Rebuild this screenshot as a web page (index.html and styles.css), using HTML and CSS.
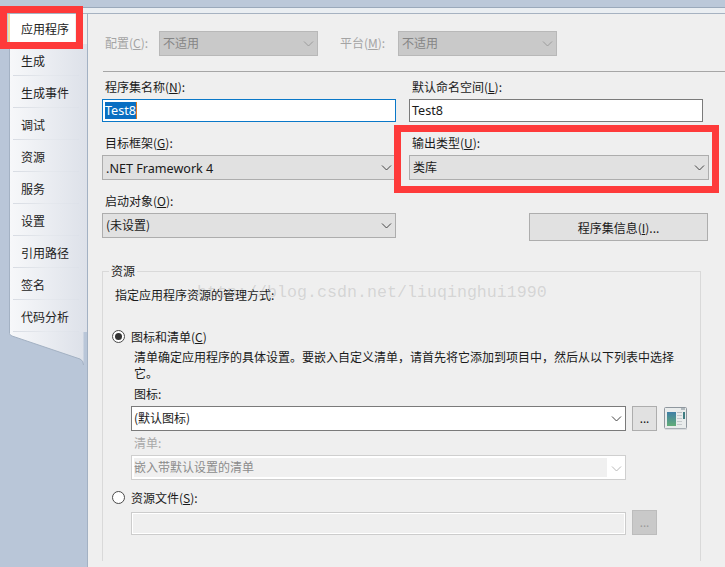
FILE: index.html
```html
<!DOCTYPE html>
<html lang="zh-CN">
<head>
<meta charset="utf-8">
<title>应用程序</title>
<link rel="stylesheet" href="styles.css">
</head>
<body>
<div class="app">
  <div class="strip-blue"></div>
  <div class="strip-light"></div>
  <div class="main">
    <nav class="side">
      <div class="tab tab-active">应用程序</div>
      <div class="tab">生成</div>
      <div class="tab">生成事件</div>
      <div class="tab">调试</div>
      <div class="tab">资源</div>
      <div class="tab">服务</div>
      <div class="tab">设置</div>
      <div class="tab">引用路径</div>
      <div class="tab">签名</div>
      <div class="tab">代码分析</div>
      <svg class="tail" width="75" height="33" viewBox="0 0 75 33">
        <defs><linearGradient id="tailg" x1="0" x2="1" y1="0" y2="0"><stop offset="0" stop-color="#f7f8fa"/><stop offset="1" stop-color="#dde1e9"/></linearGradient></defs>
        <path d="M0.5 0V1.5Q0.5 3 3 4L71 27Q74.5 28.5 74.5 33V0Z" fill="url(#tailg)"/>
        <path d="M0.5 0V1.5Q0.5 3 3 4L71 27Q74.5 28.5 74.5 33" fill="none" stroke="#a3b1c3"/>
      </svg>
    </nav>
    <section class="content">
      <div class="config-row">
        <span class="label-config disabled-text">配置(<u>C</u>):</span>
        <div class="select select-off w159"><span>不适用</span><svg class="chev" width="11" height="6" viewBox="0 0 11 6"><path d="M1 0.5L5.5 5L10 0.5" fill="none" stroke="#9c9c9c"/></svg></div>
        <span class="label-platform disabled-text">平台(<u>M</u>):</span>
        <div class="select select-off w159"><span>不适用</span><svg class="chev" width="11" height="6" viewBox="0 0 11 6"><path d="M1 0.5L5.5 5L10 0.5" fill="none" stroke="#9c9c9c"/></svg></div>
      </div>
      <div class="sep"></div>
      <div class="form-grid">
        <div class="field">
          <label class="lbl">程序集名称(<u>N</u>):</label>
          <div class="input input-focus"><span class="selected">Test8</span></div>
        </div>
        <div class="field">
          <label class="lbl">默认命名空间(<u>L</u>):</label>
          <div class="input input-narrow">Test8</div>
        </div>
        <div class="field">
          <label class="lbl">目标框架(<u>G</u>):</label>
          <div class="select"><span class="latin">.NET Framework 4</span><svg class="chev" width="11" height="6" viewBox="0 0 11 6"><path d="M1 0.5L5.5 5L10 0.5" fill="none" stroke="#444"/></svg></div>
        </div>
        <div class="field">
          <label class="lbl">输出类型(<u>U</u>):</label>
          <div class="select"><span>类库</span><svg class="chev" width="11" height="6" viewBox="0 0 11 6"><path d="M1 0.5L5.5 5L10 0.5" fill="none" stroke="#444"/></svg></div>
        </div>
        <div class="field">
          <label class="lbl">启动对象(<u>O</u>):</label>
          <div class="select"><span>(未设置)</span><svg class="chev" width="11" height="6" viewBox="0 0 11 6"><path d="M1 0.5L5.5 5L10 0.5" fill="none" stroke="#444"/></svg></div>
        </div>
        <div class="field field-button">
          <button class="btn-info">程序集信息(<u>I</u>)...</button>
        </div>
      </div>
      <div class="group">
        <span class="legend">资源</span>
        <p class="hint">指定应用程序资源的管理方式:</p>
        <div class="radio-row first-radio"><span class="radio radio-on"></span><span>图标和清单(<u>C</u>)</span></div>
        <div class="indent">
          <p class="desc">清单确定应用程序的具体设置。要嵌入自定义清单，请首先将它添加到项目中，然后从以下列表中选择它。</p>
          <label class="lbl lbl-icon">图标:</label>
          <div class="pick-row">
            <div class="select select-white w495"><span>(默认图标)</span><svg class="chev" width="11" height="6" viewBox="0 0 11 6"><path d="M1 0.5L5.5 5L10 0.5" fill="none" stroke="#444"/></svg></div>
            <button class="btn-dots">...</button>
            <svg class="app-icon" width="23" height="23" viewBox="0 0 23 23">
              <defs><linearGradient id="pane" x1="0" x2="0" y1="0" y2="1"><stop offset="0" stop-color="#3f7fa6"/><stop offset="1" stop-color="#62ad78"/></linearGradient></defs>
              <rect x="0.5" y="0.5" width="22" height="21" rx="1" fill="#e9ecec" stroke="#8f979e"/>
              <rect x="1" y="21.5" width="22" height="1" fill="#c4c8cc"/>
              <rect x="3" y="5" width="9" height="14" fill="url(#pane)"/>
              <rect x="13" y="5" width="5" height="1" fill="#b7bdc0"/>
              <rect x="13" y="8" width="5" height="1" fill="#c5c9cc"/>
              <rect x="13" y="11" width="5" height="1" fill="#c5c9cc"/>
              <rect x="13" y="14" width="5" height="1" fill="#c5c9cc"/>
              <rect x="13" y="17" width="5" height="1" fill="#c5c9cc"/>
              <rect x="19" y="5" width="2" height="7" fill="#3f7d82"/>
              <rect x="17" y="1.5" width="4" height="1" fill="#7b8890"/>
            </svg>
          </div>
          <label class="lbl lbl-manifest disabled-light">清单:</label>
          <div class="select select-faint w495"><span class="faint-value">嵌入带默认设置的清单</span><svg class="chev" width="11" height="6" viewBox="0 0 11 6"><path d="M1 0.5L5.5 5L10 0.5" fill="none" stroke="#b8b8b8"/></svg></div>
        </div>
        <div class="radio-row second-radio"><span class="radio"></span><span>资源文件(<u>S</u>):</span></div>
        <div class="indent">
          <div class="pick-row pick-bottom">
            <div class="input-off"></div>
            <button class="btn-dots btn-dots-off">...</button>
          </div>
        </div>
      </div>
    </section>
  </div>
  <div class="watermark">http://blog.csdn.net/liuqinghui1990</div>
  <div class="mark mark-tab"></div>
  <div class="mark mark-type"></div>
</div>
</body>
</html>
```
FILE: styles.css
```css
* { box-sizing: border-box; }
html, body { margin: 0; padding: 0; }
body {
  width: 725px;
  height: 567px;
  overflow: hidden;
  font-family: "Noto Sans CJK SC", "Noto Sans", sans-serif;
  font-size: 12px;
  color: #1a1a1a;
  background: #bbc8d9;
}
.app { position: relative; width: 725px; height: 567px; display: flex; flex-direction: column; }
.strip-blue { height: 8px; background: #bbc8d9; border-bottom: 1px solid #9aa9bb; flex: none; }
.strip-light { height: 6px; background: #eaeef2; border-bottom: 1px solid #a6b2c1; flex: none; }
.main { flex: 1; display: flex; min-height: 0; }

.side {
  width: 88px;
  flex: none;
  padding-left: 9px;
  background: #b9c6d8;
  border-right: 1px solid #a3b1c3;
  display: flex;
  flex-direction: column;
  align-items: flex-start;
}
.tab {
  width: 78px;
  height: 32px;
  padding-left: 11px;
  line-height: 33px;
  font-size: 12px;
  color: #222;
  background: linear-gradient(90deg, #f7f8fa, #dde1e9);
  border-left: 1px solid #a3b1c3;
  position: relative;
}
.tab::after {
  content: "";
  position: absolute;
  left: 3px;
  right: 8px;
  bottom: 0;
  height: 1px;
  background: linear-gradient(90deg, #d8dce3, #e6e9ee, #dde1e9);
}
.tab-active {
  height: 30px;
  width: 79px;
  margin-right: -1px;
  background: linear-gradient(90deg, #fff 85%, #efefef 85%);
  border-left: 2px solid #f5dfa0;
  padding-left: 11px;
  margin-left: -1px;
  line-height: 30px;
}
.tab-active::after { display: none; }
.tail { display: block; width: 75px; height: 33px; }

.content {
  flex: 1;
  min-width: 0;
  background: #efefef;
  padding: 17px 0 0 14px;
}
.config-row { display: flex; align-items: center; height: 25px; }
.disabled-text { color: #a4a4a4; padding-bottom: 2px; }
.label-config { width: 57px; padding-left: 3px; }
.label-platform { width: 80px; padding-left: 22px; }
.sep { height: 1px; background: #a6a6a6; margin: 15px 0 6px 1px; }

.form-grid {
  display: grid;
  grid-template-columns: 294px 300px;
  column-gap: 13px;
  row-gap: 12px;
}
.field { display: flex; flex-direction: column; }
.field-button { padding: 21px 1px 0 0; align-items: flex-end; }
.lbl { display: block; height: 18px; line-height: 18px; margin-bottom: 3px; padding-left: 3px; color: #1a1a1a; }

.input {
  height: 23px;
  line-height: 21px;
  padding-left: 2px;
  background: #fff;
  border: 1px solid #7a7a7a;
  font-family: "Noto Sans", sans-serif;
  font-size: 12.6px;
}
.input-focus { border-color: #0a78c8; }
.input-narrow { width: 294px; }
.selected { background: #0a6fc2; color: #fff; display: inline-block; height: 17px; line-height: 17px; margin-top: 2px; border-right: 1px solid #e07a20; vertical-align: top; }

.select {
  height: 25px;
  display: flex;
  align-items: center;
  justify-content: space-between;
  padding: 0 3px 2px 3px;
  background: #e1e1e1;
  border: 1px solid #adadad;
  color: #1a1a1a;
}
.latin { font-family: "Noto Sans", sans-serif; font-size: 12.6px; padding-top: 4px; }
.chev { flex: none; display: block; margin-top: 2px; }
.w159 { width: 159px; flex: none; }
.w495 { width: 495px; flex: none; }
.select-off { background: #c9c9c9; border-color: #b8b8b8; color: #858585; }
.select-white { background: #fff; border-color: #7a7a7a; padding-left: 2px; }
.select-faint { background: #fff; border-color: #cfcfcf; padding: 2px 3px 2px 2px; color: #8c8c8c; align-items: stretch; }
.select-faint .chev { align-self: center; }
.faint-value { width: 473px; flex: none; background: #f0f0f0; line-height: 18px; }

.btn-info {
  width: 179px;
  height: 28px;
  background: #e1e1e1;
  border: 1px solid #adadad;
  font: inherit;
  color: #1a1a1a;
  padding: 0;
}

.group {
  position: relative;
  margin-top: 30px;
  width: 599px;
  height: 290px;
  border: 1px solid #d9d9d9;
  border-bottom: none;
  padding-top: 14px;
}
.legend {
  position: absolute;
  left: 6px;
  top: -10px;
  padding: 0 2px;
  line-height: 18px;
  background: #efefef;
}
.hint { margin: 0 0 0 12px; line-height: 18px; }
.radio-row { display: flex; align-items: center; height: 18px; padding-left: 9px; gap: 6px; }
.first-radio { margin-top: 23px; }
.second-radio { margin-top: 8px; }
.radio {
  width: 13px;
  height: 13px;
  border: 1px solid #4a4a4a;
  border-radius: 50%;
  background: #fff;
  flex: none;
  position: relative;
}
.radio-on::after {
  content: "";
  position: absolute;
  left: 2px;
  top: 2px;
  width: 7px;
  height: 7px;
  border-radius: 50%;
  background: #333;
}
.indent { margin-left: 28px; }
.desc { margin: 4px 0 4px 3px; width: 545px; line-height: 16px; }
.lbl-icon { margin-bottom: 3px; }
.lbl-manifest { margin: 3px 0; }
.disabled-light { color: #a8a8a8; }
.pick-row { display: flex; align-items: flex-start; gap: 6px; }
.pick-bottom { align-items: flex-end; margin-top: 4px; }
.btn-dots {
  width: 25px;
  height: 25px;
  flex: none;
  background: #e1e1e1;
  border: 1px solid #adadad;
  font-family: "Noto Sans", sans-serif;
  font-size: 12px;
  color: #111;
  padding: 0;
}
.btn-dots-off { background: #c9c9c9; border-color: #bcbcbc; color: #9a9a9a; }
.app-icon { flex: none; margin: 1px 0 0 1px; display: block; }
.input-off {
  width: 495px;
  height: 23px;
  flex: none;
  background: #efefef;
  border: 1px solid #cccccc;
  outline: 1px solid #fff;
  outline-offset: -2px;
}

.watermark {
  position: absolute;
  left: 197px;
  top: 282px;
  font-family: "Liberation Mono", monospace;
  font-size: 16.67px;
  line-height: 22px;
  white-space: nowrap;
  color: rgba(150, 150, 150, 0.3);
  pointer-events: none;
}
.mark { position: absolute; border: 7px solid #fe3a3a; pointer-events: none; }
.mark-tab { left: 0; top: 6px; width: 83px; height: 43px; }
.mark-type { left: 394px; top: 125px; width: 325px; height: 68px; }
```
